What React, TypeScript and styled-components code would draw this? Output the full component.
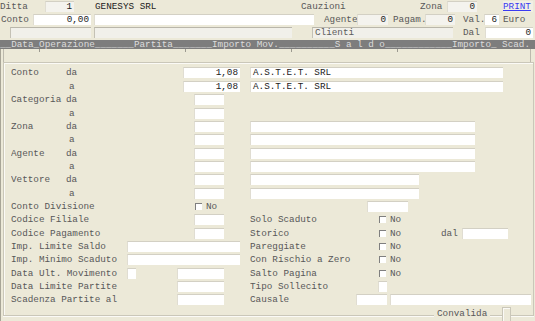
import React from 'react';
import styled, { createGlobalStyle } from 'styled-components';

type Span = [number, number];

// column stops in page pixels; every cell names the stops it spans
const TOP = [0, 10, 33, 45, 74, 91, 94, 95, 290, 292, 301, 312, 314, 324, 357, 388, 393, 420, 425, 447, 453, 455, 463, 477, 484, 485, 499, 503, 533, 535];
const MAIN = [12, 67, 128, 137, 178, 184, 195, 225, 241, 251, 357, 368, 379, 388, 391, 409, 420, 442, 463, 476, 504, 509, 532];

const colsFor = (stops: number[]) =>
    stops
        .slice(1)
        .map((s, i) => `${s - stops[i]}px`)
        .join(' ');

const spanIn = (stops: number[]) => ([a, b]: Span) => `${stops.indexOf(a) + 1} / ${stops.indexOf(b) + 1}`;
const topCol = spanIn(TOP);
const mainCol = spanIn(MAIN);

const HEADER =
    '__Data_Operazione_______Partita_______Importo Mov.__________S a l d o____________Importo_ Scad.';

const GlobalStyle = createGlobalStyle`
    html, body {
        margin: 0;
        padding: 0;
        background: #ece9d8;
    }
    body {
        font-family: "Liberation Mono", "Courier New", monospace;
        font-size: 9.3px;
        color: #585858;
        overflow: hidden;
    }
`;

const Screen = styled.div`
    width: 535px;
    height: 321px;
    overflow: hidden;
`;

const TopArea = styled.div`
    display: flex;
    flex-direction: column;
    height: 39px;
`;

const TopRow = styled.div`
    display: grid;
    grid-template-columns: ${colsFor(TOP)};
    height: 13px;
    align-items: center;
`;

const Cell = styled.div<{ $col: string; $pad?: number }>`
    grid-column: ${(p) => p.$col};
    min-width: 0;
    white-space: pre;
    overflow: hidden;
    line-height: 11px;
    padding-left: ${(p) => p.$pad ?? 0}px;
`;

const Value = styled(Cell)`
    color: #222;
`;

const Link = styled(Cell)`
    color: #3b3bf0;
    text-decoration: underline;
    text-underline-offset: 1px;
    background: #f1efe6;
`;

const Field = styled.div<{ $col: string; $tone?: 'white' | 'gray' | 'pale'; $right?: boolean }>`
    grid-column: ${(p) => p.$col};
    box-sizing: border-box;
    height: 11px;
    line-height: 10px;
    padding: 0 2px 0 2px;
    white-space: pre;
    overflow: hidden;
    color: #222;
    text-align: ${(p) => (p.$right ? 'right' : 'left')};
    background: ${(p) => (p.$tone === 'gray' ? '#f1f0ea' : p.$tone === 'pale' ? '#f4f3ee' : '#ffffff')};
    border-top: 1px solid ${(p) => (p.$tone === 'gray' ? '#b9b6aa' : '#d3d0c4')};
    border-left: 1px solid ${(p) => (p.$tone === 'gray' ? '#c4c1b5' : '#e0ddd2')};
`;

const GrayText = styled.span`
    color: #5c5c5c;
`;

const HeaderBar = styled.div`
    margin-top: 1px;
    height: 9px;
    background: #7d7d7d;
    color: #dcdcdc;
    line-height: 9px;
    white-space: pre;
    overflow: hidden;
`;

const Body = styled.div`
    border-left: 1px solid #a8a597;
    height: 272px;
`;

const ListArea = styled.div`
    display: grid;
    grid-template-columns: 36px 146px 106px 106px 1fr;
    height: 13px;
    margin: 0 4px 0 2px;
    border-left: 1px solid #bcb9ad;
    border-right: 1px solid #bcb9ad;
`;

const Tick = styled.div<{ $mark?: boolean }>`
    height: 3px;
    border-right: ${(p) => (p.$mark ? '1px solid #9c9a90' : 'none')};
`;

const Frame = styled.div`
    position: relative;
    box-sizing: border-box;
    height: 254px;
    margin: 0 1px 0 2px;
    padding: 3.3px 0 0 7px;
    border: 1px solid #cac7b9;
    box-shadow: inset 1px 1px 0 #fbfaf6, 0 1px 0 #fbfaf6;
`;

const FormRow = styled.div`
    display: grid;
    grid-template-columns: ${colsFor(MAIN)};
    height: 13.35px;
    align-items: center;
`;

const Check = styled.div<{ $col: string }>`
    grid-column: ${(p) => p.$col};
    display: flex;
    align-items: center;
    gap: 4px;
    padding-left: 1px;
    line-height: 11px;
`;

const Box = styled.span`
    box-sizing: border-box;
    width: 7px;
    height: 7px;
    background: #ffffff;
    border-top: 1px solid #7f7f7f;
    border-left: 1px solid #7f7f7f;
`;

const Legend = styled.div`
    position: absolute;
    left: 430px;
    top: 245px;
    padding: 0 3px;
    background: #ece9d8;
    line-height: 11px;
`;

const Stub = styled.div`
    position: absolute;
    left: 498px;
    top: 244px;
    width: 7px;
    height: 14px;
    background: #ece9d8;
    border: 1px solid #cac7b9;
    border-bottom: none;
    box-shadow: inset 1px 1px 0 #fbfaf6;
`;

type Item =
    | { t: 'label'; at: Span; text: string; pad?: number }
    | { t: 'field'; at: Span; text?: string; right?: boolean }
    | { t: 'check'; at: Span };

const L = (at: Span, text: string, pad?: number): Item => ({ t: 'label', at, text, pad });
const F = (at: Span, text?: string, right?: boolean): Item => ({ t: 'field', at, text, right });
const C = (at: Span): Item => ({ t: 'check', at });

const NAME: Span = [12, 67];
const SUB: Span = [67, 128];
const LONG: Span = [12, 128];
const SMALL: Span = [195, 225];
const RLABEL: Span = [251, 357];
const RCHECK: Span = [379, 409];

const rows: Item[][] = [
    [L(NAME, 'Conto'), L(SUB, 'da'), F([184, 241], '1,08', true), F([251, 504], 'A.S.T.E.T. SRL')],
    [L(SUB, 'a', 3), F([184, 241], '1,08', true), F([251, 504], 'A.S.T.E.T. SRL')],
    [L(NAME, 'Categoria'), L(SUB, 'da'), F(SMALL)],
    [L(SUB, 'a', 3), F(SMALL)],
    [L(NAME, 'Zona'), L(SUB, 'da'), F(SMALL), F([251, 476])],
    [L(SUB, 'a', 3), F(SMALL), F([251, 476])],
    [L(NAME, 'Agente'), L(SUB, 'da'), F(SMALL), F([251, 476])],
    [L(SUB, 'a', 3), F(SMALL), F([251, 476])],
    [L(NAME, 'Vettore'), L(SUB, 'da'), F(SMALL), F([251, 420])],
    [L(SUB, 'a', 3), F(SMALL), F([251, 420])],
    [L(LONG, 'Conto Divisione'), C(SMALL), F([368, 409])],
    [L(LONG, 'Codice Filiale'), F(SMALL), L(RLABEL, 'Solo Scaduto'), C(RCHECK)],
    [L(LONG, 'Codice Pagamento'), F(SMALL), L(RLABEL, 'Storico'), C(RCHECK), L([442, 463], 'dal'), F([463, 509])],
    [L(LONG, 'Imp. Limite Saldo'), F([128, 241]), L(RLABEL, 'Pareggiate'), C(RCHECK)],
    [L(LONG, 'Imp. Minimo Scaduto'), F([128, 241]), L(RLABEL, 'Con Rischio a Zero'), C(RCHECK)],
    [L(LONG, 'Data Ult. Movimento'), F([128, 137]), F([178, 225]), L(RLABEL, 'Salto Pagina'), C(RCHECK)],
    [L(LONG, 'Data Limite Partite'), F([178, 225]), L(RLABEL, 'Tipo Sollecito'), F([379, 388])],
    [L(LONG, 'Scadenza Partite al'), F([178, 225]), L(RLABEL, 'Causale'), F([357, 388]), F([391, 532])],
];

const renderItem = (item: Item, i: number) => {
    const col = mainCol(item.at);
    if (item.t === 'label') {
        return (
            <Cell key={i} $col={col} $pad={item.pad}>
                {item.text}
            </Cell>
        );
    }
    if (item.t === 'check') {
        return (
            <Check key={i} $col={col}>
                <Box />
                <span>No</span>
            </Check>
        );
    }
    return (
        <Field key={i} $col={col} $right={item.right}>
            {item.text}
        </Field>
    );
};

const App: React.FC = () => {
    return (
        <Screen>
            <GlobalStyle />
            <TopArea>
                <TopRow>
                    <Cell $col={topCol([0, 45])}>Ditta</Cell>
                    <Field $col={topCol([45, 74])} $tone="pale" $right>
                        1
                    </Field>
                    <Value $col={topCol([95, 290])}>GENESYS SRL</Value>
                    <Cell $col={topCol([301, 420])}>Cauzioni</Cell>
                    <Cell $col={topCol([420, 447])}>Zona</Cell>
                    <Field $col={topCol([447, 477])} $tone="pale" $right>
                        0
                    </Field>
                    <Link $col={topCol([503, 533])}>PRINT</Link>
                </TopRow>
                <TopRow>
                    <Cell $col={topCol([0, 33])} $pad={1}>
                        Conto
                    </Cell>
                    <Field $col={topCol([33, 91])} $right>
                        0,00
                    </Field>
                    <Field $col={topCol([94, 314])} />
                    <Cell $col={topCol([324, 357])}>Agente</Cell>
                    <Field $col={topCol([357, 388])} $tone="pale" $right>
                        0
                    </Field>
                    <Cell $col={topCol([393, 425])}>Pagam.</Cell>
                    <Field $col={topCol([425, 455])} $tone="pale" $right>
                        0
                    </Field>
                    <Cell $col={topCol([463, 484])}>Val.</Cell>
                    <Field $col={topCol([484, 499])} $right>
                        6
                    </Field>
                    <Cell $col={topCol([503, 533])}>Euro</Cell>
                </TopRow>
                <TopRow>
                    <Field $col={topCol([10, 91])} $tone="gray" />
                    <Field $col={topCol([94, 292])} $tone="gray" />
                    <Field $col={topCol([312, 453])} $tone="gray">
                        <GrayText>Clienti</GrayText>
                    </Field>
                    <Cell $col={topCol([463, 485])}>Dal</Cell>
                    <Field $col={topCol([485, 533])} $right>
                        0
                    </Field>
                </TopRow>
            </TopArea>
            <HeaderBar>{HEADER}</HeaderBar>
            <Body>
                <ListArea>
                    <Tick $mark />
                    <Tick $mark />
                    <Tick $mark />
                    <Tick $mark />
                    <Tick />
                </ListArea>
                <Frame>
                    {rows.map((row, r) => (
                        <FormRow key={r}>{row.map(renderItem)}</FormRow>
                    ))}
                    <Legend>Convalida</Legend>
                    <Stub />
                </Frame>
            </Body>
        </Screen>
    );
};

export default App;
